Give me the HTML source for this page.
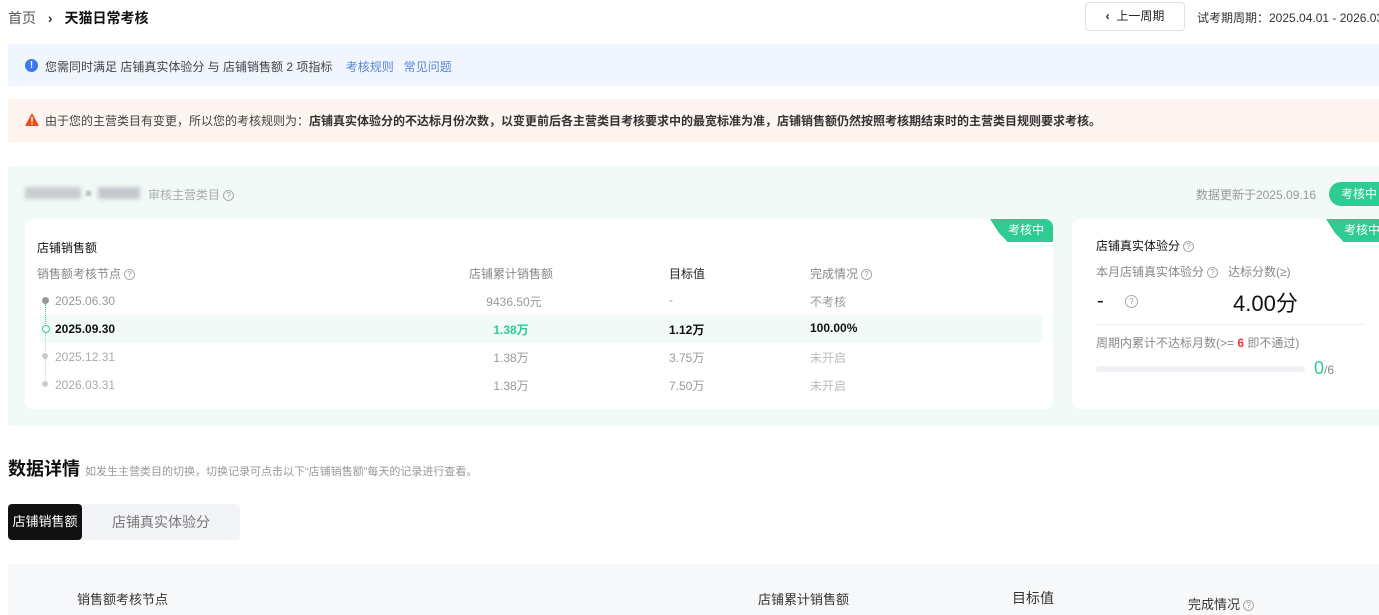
<!DOCTYPE html>
<html><head><meta charset="utf-8"><style>
*{margin:0;padding:0;box-sizing:border-box}
html,body{width:1379px;height:615px;overflow:hidden}
body{background:#fff;font-family:"Liberation Sans","Noto Sans CJK SC",sans-serif;color:#333;position:relative;font-size:12px}
.a{position:absolute;white-space:nowrap}
.q{display:inline-block;width:11px;height:11px;border:1px solid #aaa;border-radius:50%;font-size:8px;line-height:9px;text-align:center;color:#999;vertical-align:1px;margin-left:3px}
.tag{position:absolute;background:#2ecc93;color:#fff;font-size:12px;height:23px;line-height:23px;padding-left:18px;width:63px;clip-path:polygon(0 0,100% 0,100% 100%,28% 100%,14% 60%);border-top-right-radius:8px}
</style></head><body>
<div class="a" style="left:8px;top:8px;font-size:14px;color:#555">首页 <span style="margin:0 8px;color:#333;font-weight:bold">›</span> <b style="color:#111">天猫日常考核</b></div>
<div class="a" style="left:1085px;top:2px;width:100px;height:29px;border:1px solid #dde0e6;border-radius:4px;font-size:12px;line-height:27px;text-align:center;color:#222"><b>‹</b>&nbsp; 上一周期</div>
<div class="a" style="left:1197px;top:9px;font-size:12px;color:#333">试考期周期：2025.04.01 - 2026.03.31</div>

<div class="a" style="left:8px;top:44px;width:1380px;height:42px;background:#f0f5fe"></div>
<div class="a" style="left:25px;top:59px;width:13px;height:13px;border-radius:50%;background:#3a7af0;color:#fff;font-size:10px;line-height:13px;text-align:center;font-weight:bold">!</div>
<div class="a" style="left:45px;top:58px;color:#444">您需同时满足 店铺真实体验分 与 店铺销售额 2 项指标 &nbsp;&nbsp; <span style="color:#5b86d6">考核规则</span> &nbsp; <span style="color:#5b86d6">常见问题</span></div>

<div class="a" style="left:8px;top:99px;width:1380px;height:43px;background:#fdf3ef"></div>
<svg class="a" style="left:25px;top:113px" width="14" height="13"><path d="M7 0 L14 13 L0 13Z" fill="#f04a1a"/><rect x="6.3" y="4" width="1.4" height="5" fill="#fff"/><rect x="6.3" y="10" width="1.4" height="1.4" fill="#fff"/></svg>
<div class="a" style="left:45px;top:112px;color:#444">由于您的主营类目有变更，所以您的考核规则为：<b style="color:#333">店铺真实体验分的不达标月份次数，以变更前后各主营类目考核要求中的最宽标准为准，店铺销售额仍然按照考核期结束时的主营类目规则要求考核。</b></div>

<div class="a" style="left:8px;top:166px;width:1380px;height:260px;background:#f1faf6"></div>
<div class="a" style="left:25px;top:187px;width:56px;height:12px;background:#c9ccd0;filter:blur(2px)"></div>
<div class="a" style="left:86px;top:191px;width:5px;height:5px;background:#bbb;filter:blur(1px)"></div>
<div class="a" style="left:98px;top:187px;width:42px;height:12px;background:#c4c7cb;filter:blur(2px)"></div>
<div class="a" style="left:148px;top:186px;color:#aaa">审核主营类目<span class="q">?</span></div>
<div class="a" style="left:1196px;top:186px;color:#999">数据更新于2025.09.16</div>
<div class="a" style="left:1329px;top:182px;width:70px;height:24px;border-radius:12px;background:#2ecc93;color:#fff;line-height:24px;padding-left:12px">考核中</div>

<div class="a" style="left:25px;top:219px;width:1028px;height:190px;background:#fff;border-radius:8px"></div>
<div class="tag" style="left:990px;top:219px">考核中</div>
<div class="a" style="left:37px;top:239px;color:#111">店铺销售额</div>
<div class="a" style="left:37px;top:265px;color:#888">销售额考核节点<span class="q">?</span></div>
<div class="a" style="left:469px;top:265px;color:#888">店铺累计销售额</div>
<div class="a" style="left:669px;top:265px;color:#222">目标值</div>
<div class="a" style="left:810px;top:265px;color:#888">完成情况<span class="q">?</span></div>
<div class="a" style="left:40px;top:315px;width:1002px;height:28px;background:#f1faf6;border-radius:4px"></div>
<div class="a" style="left:45px;top:304px;height:20px;border-left:1px dotted #2ecc93"></div>
<div class="a" style="left:45px;top:332px;height:52px;border-left:1px dotted #ccc"></div>
<div class="a" style="left:42px;top:297px;width:7px;height:7px;border-radius:50%;background:#999"></div>
<div class="a" style="left:42px;top:325px;width:8px;height:8px;border-radius:50%;border:1.5px solid #2ecc93;background:#fff"></div>
<div class="a" style="left:42px;top:353px;width:6px;height:6px;border-radius:50%;background:#ccc"></div>
<div class="a" style="left:42px;top:381px;width:6px;height:6px;border-radius:50%;background:#ccc"></div>
<div class="a" style="left:55px;top:294px;color:#999">2025.06.30</div>
<div class="a" style="left:55px;top:322px;color:#111;font-weight:bold">2025.09.30</div>
<div class="a" style="left:55px;top:350px;color:#aaa">2025.12.31</div>
<div class="a" style="left:55px;top:378px;color:#aaa">2026.03.31</div>
<div class="a" style="left:469px;top:293px;width:90px;text-align:center;color:#999">9436.50元</div>
<div class="a" style="left:469px;top:321px;width:84px;text-align:center;color:#2ecc93;font-weight:bold">1.38万</div>
<div class="a" style="left:469px;top:349px;width:84px;text-align:center;color:#999">1.38万</div>
<div class="a" style="left:469px;top:377px;width:84px;text-align:center;color:#999">1.38万</div>
<div class="a" style="left:669px;top:293px;color:#999">-</div>
<div class="a" style="left:669px;top:321px;color:#111;font-weight:bold">1.12万</div>
<div class="a" style="left:669px;top:349px;color:#999">3.75万</div>
<div class="a" style="left:669px;top:377px;color:#999">7.50万</div>
<div class="a" style="left:810px;top:293px;color:#999">不考核</div>
<div class="a" style="left:810px;top:321px;color:#111;font-weight:bold">100.00%</div>
<div class="a" style="left:810px;top:349px;color:#bbb">未开启</div>
<div class="a" style="left:810px;top:377px;color:#bbb">未开启</div>

<div class="a" style="left:1072px;top:219px;width:330px;height:190px;background:#fff;border-radius:8px"></div>
<div class="tag" style="left:1326px;top:219px">考核中</div>
<div class="a" style="left:1096px;top:237px;color:#111">店铺真实体验分<span class="q">?</span></div>
<div class="a" style="left:1096px;top:263px;color:#888">本月店铺真实体验分<span class="q">?</span> &nbsp; 达标分数(≥)</div>
<div class="a" style="left:1097px;top:290px;font-size:20px;color:#111">-</div>
<div class="a" style="left:1122px;top:294px"><span class="q" style="width:13px;height:13px;line-height:11px">?</span></div>
<div class="a" style="left:1233px;top:286px;font-size:22px;color:#111">4.00分</div>
<div class="a" style="left:1096px;top:324px;width:268px;height:1px;background:#eee"></div>
<div class="a" style="left:1096px;top:334px;color:#888">周期内累计不达标月数(&gt;= <b style="color:#e33">6</b> 即不通过)</div>
<div class="a" style="left:1096px;top:366px;width:209px;height:6px;border-radius:3px;background:#f0f1f4"></div>
<div class="a" style="left:1314px;top:358px;color:#2ecc93;font-size:18px">0<span style="font-size:12px;color:#888">/6</span></div>

<div class="a" style="left:8px;top:455px;font-size:18px;font-weight:bold;color:#111">数据详情 <span style="font-size:11px;font-weight:normal;color:#999">如发生主营类目的切换，切换记录可点击以下“店铺销售额”每天的记录进行查看。</span></div>
<div class="a" style="left:8px;top:504px;width:232px;height:36px;background:#f3f4f7;border-radius:4px"></div>
<div class="a" style="left:8px;top:504px;width:74px;height:36px;background:#111;border-radius:4px;color:#fff;font-size:13px;line-height:36px;text-align:center">店铺销售额</div>
<div class="a" style="left:82px;top:504px;width:158px;height:36px;color:#777;font-size:14px;line-height:36px;text-align:center">店铺真实体验分</div>

<div class="a" style="left:8px;top:564px;width:1380px;height:60px;background:#f7f8fa"></div>
<div class="a" style="left:77px;top:589px;font-size:13px;color:#333">销售额考核节点</div>
<div class="a" style="left:758px;top:589px;font-size:13px;color:#333">店铺累计销售额</div>
<div class="a" style="left:1012px;top:588px;font-size:14px;color:#333">目标值</div>
<div class="a" style="left:1188px;top:594px;font-size:13px;color:#333">完成情况<span class="q">?</span></div>
</body></html>
